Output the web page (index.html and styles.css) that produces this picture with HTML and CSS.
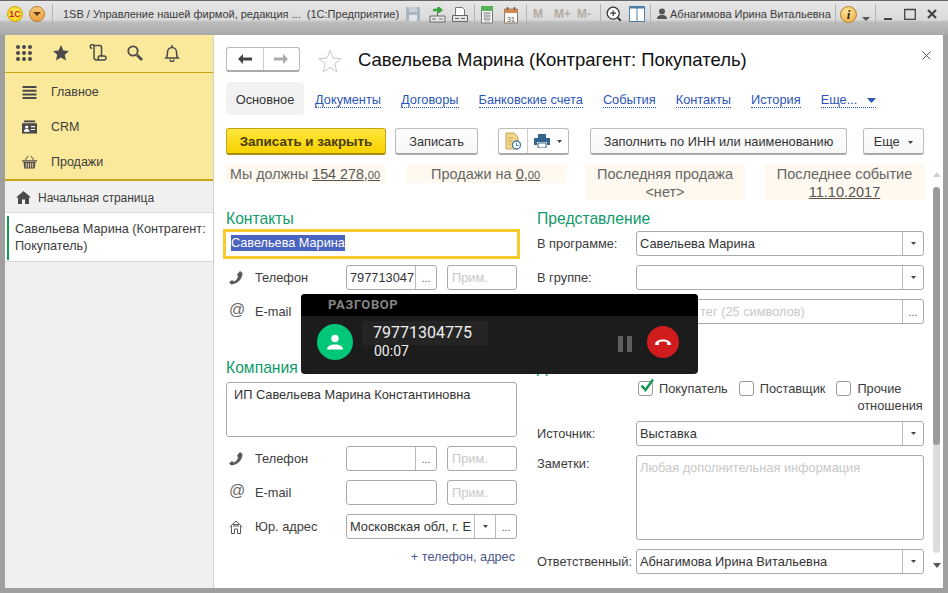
FILE: index.html
```html
<!DOCTYPE html>
<html lang="ru">
<head>
<meta charset="utf-8">
<title>1SB</title>
<link rel="stylesheet" href="styles.css">
</head>
<body>
<div class="window">
  <header class="titlebar">
    <span class="logo">1С</span>
    <span class="menu-btn"><svg width="10" height="6" viewBox="0 0 10 6"><path d="M1 1h8L5 5z" fill="#5a3c10"/></svg></span>
    <span class="tsep sep-a"></span>
    <span class="apptitle">1SB / Управление нашей фирмой, редакция ...&nbsp; (1С:Предприятие)</span>
    <span class="ticons">
      <svg class="ti t0" width="14" height="16" viewBox="0 0 14 16"><path d="M0 1h14v14H0z" fill="#a9b6c2"/><path d="M3 1h8v5H3z" fill="#c8d0d8"/><path d="M3 9h8v6H3z" fill="#dfe4e8"/></svg>
      <svg class="ti t1" width="17" height="18" viewBox="0 0 17 18"><path d="M8 1h2.500l3.500 3-3.500 3H8V5.300H4V2.700h4z" fill="#3aa63a"/><path d="M1 10h15v6H1z" fill="#e8e8e8" stroke="#666"/><path d="M3 13h4M10 13h4M8.500 7v3" stroke="#666"/></svg>
      <svg class="ti t2" width="16" height="18" viewBox="0 0 16 18"><path d="M3.500 1.500h7l2 2v7h-9z" fill="#fff" stroke="#777"/><path d="M.5 9.500h15v6H.5z" fill="#e4e4e4" stroke="#666"/><path d="M3 12.500h4M9 12.500h4" stroke="#666"/></svg>
      <span class="tsep sep-b"></span>
      <svg class="ti t3" width="12" height="18" viewBox="0 0 12 18"><path d="M.5 1h11v16H.5z" fill="#fff" stroke="#777"/><path d="M0 0h12v5H0z" fill="#5bb05b"/><path d="M2 7h8M2 10h8M2 13h8M4 6v10M6 6v10M8 6v10" stroke="#999"/></svg>
      <svg class="ti t4" width="14" height="18" viewBox="0 0 14 18"><path d="M.5 3h13v14H.5z" fill="#fbfaf6" stroke="#8a7a66"/><path d="M.5 3h13v4H.5z" fill="#d08a55"/><path d="M3.500 1v3M10.500 1v3" stroke="#8a5a35" stroke-width="1.500"/><text x="7" y="15.500" text-anchor="middle" class="cal31">31</text></svg>
      <span class="tsep sep-c"></span>
      <span class="mem m0">M</span><span class="mem m1">M+</span><span class="mem m2">M-</span>
      <span class="tsep sep-d"></span>
      <svg class="ti t5" width="16" height="16" viewBox="0 0 20 20"><circle cx="9" cy="9" r="7.500" fill="#fff" stroke="#333" stroke-width="1.500"/><path d="M14.500 14.500l4 4" stroke="#333" stroke-width="2.400"/><path d="M5.500 9h7M9 5.500v7" stroke="#333" stroke-width="1.500"/></svg>
      <svg class="ti t6" width="16" height="16" viewBox="0 0 16 16"><path d="M.5.500h15v15H.5z" fill="#fff" stroke="#4c7fa8"/><path d="M.5.500h15v2H.5z" fill="#4c7fa8"/><path d="M8 1v14" stroke="#4c7fa8"/></svg>
      <span class="tsep sep-e"></span>
      <svg class="ti t7" width="10" height="12" viewBox="0 0 10 12"><circle cx="5" cy="3.500" r="3" fill="#555"/><path d="M0 11c0-3 2-4 5-4s5 1 5 4z" fill="#555"/></svg>
      <span class="username">Абнагимова Ирина Витальевна</span>
      <span class="tsep sep-f"></span>
      <span class="info">i</span>
      <svg class="ti t8" width="8" height="4" viewBox="0 0 8 4"><path d="M0 0h8L4 4z" fill="#555"/></svg>
      <span class="tsep sep-g"></span>
      <svg class="ti t9" width="8" height="12" viewBox="0 0 8 12"><path d="M0 10h8" stroke="#444" stroke-width="2"/></svg>
      <svg class="ti t10" width="12" height="12" viewBox="0 0 12 12"><path d="M.7 1.500h10.600v10H.7z" fill="none" stroke="#444" stroke-width="1.300"/></svg>
      <svg class="ti t11" width="10" height="10" viewBox="0 0 10 10"><path d="M1 1l8 8M9 1l-8 8" stroke="#444" stroke-width="2.200"/></svg>
    </span>
  </header>
  <div class="main">
    <aside class="sidebar">
      <div class="sidetools">
        <svg width="18" height="18" viewBox="0 0 18 18" fill="#4a4a4a"><circle cx="3" cy="3" r="2"/><circle cx="9" cy="3" r="2"/><circle cx="15" cy="3" r="2"/><circle cx="3" cy="9" r="2"/><circle cx="9" cy="9" r="2"/><circle cx="15" cy="9" r="2"/><circle cx="3" cy="15" r="2"/><circle cx="9" cy="15" r="2"/><circle cx="15" cy="15" r="2"/></svg>
        <svg width="18" height="18" viewBox="0 0 18 18" fill="#4a4a4a"><path d="M9 1l2.400 5.400 5.600.6-4.200 3.800 1.200 5.700L9 13.600 4 16.500l1.200-5.700L1 7l5.600-.6z"/></svg>
        <svg width="18" height="18" viewBox="0 0 18 18" fill="none" stroke="#4a4a4a" stroke-width="1.500"><path d="M3 4.500a2 2 0 1 1 2-3h6c1 0 1.500.7 1.500 2v9"/><path d="M5 1.500V13c0 1.500 1 3 2.500 3H15a2 2 0 0 0 0-4h-3a2 2 0 0 0-1.500 4"/></svg>
        <svg width="18" height="18" viewBox="0 0 18 18" fill="none" stroke="#4a4a4a"><circle cx="7" cy="7" r="4.700" stroke-width="1.800"/><path d="M11 11l5 5" stroke-width="2.600"/></svg>
        <svg width="18" height="18" viewBox="0 0 18 18" fill="none" stroke="#4a4a4a" stroke-width="1.500"><path d="M3 14c1.500-1.500 1.500-3 1.500-6a4.500 4.500 0 0 1 9 0c0 3 0 4.500 1.500 6z"/><path d="M9 1v2M7 15.500a2 2 0 0 0 4 0" /></svg>
      </div>
      <nav class="sections">
        <div class="section"><svg class="sico" width="14" height="14" viewBox="0 0 14 14" fill="#4a4a4a"><path d="M0 1h14v2H0zM0 4.700h14v2H0zM0 8.400h14v2H0zM0 12h14v2H0z"/></svg><span>Главное</span></div>
        <div class="section"><svg class="sico" width="16" height="14" viewBox="0 0 16 14"><path d="M2 0h12v2H2z" fill="#4a4a4a"/><path d="M0 3h16v11H0z" fill="#4a4a4a"/><circle cx="5" cy="7" r="1.700" fill="#fff"/><path d="M2 12c0-2 1-3 3-3s3 1 3 3zM9.500 6h4.500v1.300H9.500zM9.500 9h4.500v1.300H9.500z" fill="#fff"/></svg><span>CRM</span></div>
        <div class="section"><svg class="sico" width="16" height="14" viewBox="0 0 16 14" fill="#4a4a4a"><path d="M0 5h16v1.500H0zM1.500 7h13l-1 7h-11z"/><path d="M3.500 5l3-4.500M12.500 5l-3-4.500" stroke="#4a4a4a" fill="none"/><path d="M4.500 8v5M6.800 8v5M9.200 8v5M11.500 8v5" stroke="#fbe99b" fill="none"/></svg><span>Продажи</span></div>
      </nav>
      <div class="home"><svg width="15" height="13" viewBox="0 0 15 13" fill="#4a4a4a"><path d="M7.500 0L15 6.500h-2V13H9V8.500H6V13H2V6.500H0z"/></svg><span>Начальная страница</span></div>
      <div class="opened">Савельева Марина (Контрагент: Покупатель)</div>
    </aside>
    <main class="content">
      <div class="headrow">
        <div class="navpair">
          <span class="navbtn"><svg width="14" height="10" viewBox="0 0 14 10"><path d="M0 5l5-5v3.500h9v3H5V10z" fill="#444"/></svg></span>
          <span class="navbtn"><svg width="14" height="10" viewBox="0 0 14 10"><path d="M14 5L9 0v3.500H0v3h9V10z" fill="#aaa"/></svg></span>
        </div>
        <svg class="star" width="24" height="24" viewBox="0 0 24 24"><path d="M12 1.500l3 7.600 8 .6-6.200 5.100 2 8L12 18.500l-6.800 4.300 2-8L1 9.700l8-.6z" fill="#fff" stroke="#c8c8c8"/></svg>
        <h1 class="title">Савельева Марина (Контрагент: Покупатель)</h1>
        <svg class="close" width="9" height="9" viewBox="0 0 9 9"><path d="M.5.500l8 8M8.500.500l-8 8" stroke="#555"/></svg>
      </div>
      <div class="tabs">
        <span class="tab active">Основное</span>
        <span class="tab">Документы</span>
        <span class="tab">Договоры</span>
        <span class="tab">Банковские счета</span>
        <span class="tab">События</span>
        <span class="tab">Контакты</span>
        <span class="tab">История</span>
        <span class="tab more">Еще... <svg width="9" height="5" viewBox="0 0 9 5"><path d="M0 0h9L4.500 5z" fill="#2a56b8"/></svg></span>
      </div>
      <div class="actions">
        <button class="btn primary">Записать и закрыть</button>
        <button class="btn save">Записать</button>
        <div class="btngroup">
          <span class="gbtn first"><svg width="16" height="18" viewBox="0 0 16 18"><path d="M1 1h8l4 4v12H1z" fill="#f0d68e" stroke="#c9a653"/><path d="M3 6h5M3 9h4M3 12h3" stroke="#c9a653"/><circle cx="11.500" cy="13" r="4" fill="#fff" stroke="#3c78a8" stroke-width="1.300"/><path d="M11.500 11v2.500h2" stroke="#3c78a8" fill="none"/></svg></span>
          <span class="gbtn second"><svg width="16" height="14" viewBox="0 0 16 14"><path d="M4 0h8v4H4z" fill="#33648c"/><path d="M0 4h16v7h-3V8H3v3H0z" fill="#33648c"/><path d="M4 9h8v5H4z" fill="#fff" stroke="#33648c"/></svg><svg width="5" height="3" viewBox="0 0 5 3"><path d="M0 0h5L2.500 3z" fill="#444"/></svg></span>
        </div>
        <button class="btn fill">Заполнить по ИНН или наименованию</button>
        <button class="btn moreb">Еще <svg width="5" height="3" viewBox="0 0 5 3"><path d="M0 0h5L2.500 3z" fill="#444"/></svg></button>
      </div>
      <div class="scrollarea">
        <div class="formarea">
          <div class="infos">
            <div class="infobox short left">Мы должны <span class="money">154 278,<small>00</small></span></div>
            <div class="infobox short">Продажи на <span class="money">0,<small>00</small></span></div>
            <div class="infobox">Последняя продажа<br>&lt;нет&gt;</div>
            <div class="infobox">Последнее событие<br><span class="money">11.10.2017</span></div>
          </div>
          <div class="columns">
            <section class="col leftcol">
              <h2 class="heading">Контакты</h2>
              <div class="focusfield"><span class="selected">Савельева Марина</span></div>
              <div class="row">
                <svg class="ric" width="14" height="14" viewBox="0 0 14 14"><path d="M11 0l2.500 2c0 6-5 11-11 11.500L0 11.500l3-2.500 2 1.500c2-1 3.500-3 4-5L8 3.500z" fill="#5a5a5a"/></svg>
                <span class="rlabel">Телефон</span>
                <span class="field phone"><span class="ftext">797713047</span><span class="dots">...</span></span>
                <span class="field note">Прим.</span>
              </div>
              <div class="row">
                <span class="ric at">@</span>
                <span class="rlabel">E-mail</span>
                <span class="field plain"></span>
                <span class="field note">Прим.</span>
              </div>
              <h2 class="heading second-h">Компания</h2>
              <div class="field area company">ИП Савельева Марина Константиновна</div>
              <div class="row">
                <svg class="ric" width="14" height="14" viewBox="0 0 14 14"><path d="M11 0l2.500 2c0 6-5 11-11 11.500L0 11.500l3-2.500 2 1.500c2-1 3.500-3 4-5L8 3.500z" fill="#5a5a5a"/></svg>
                <span class="rlabel">Телефон</span>
                <span class="field phone"><span class="ftext"></span><span class="dots">...</span></span>
                <span class="field note">Прим.</span>
              </div>
              <div class="row">
                <span class="ric at">@</span>
                <span class="rlabel">E-mail</span>
                <span class="field plain"></span>
                <span class="field note">Прим.</span>
              </div>
              <div class="row">
                <svg class="ric" width="14" height="14" viewBox="0 0 14 14" fill="none" stroke="#5a5a5a"><path d="M.5 7L7 1l6.500 6M2.500 6v7.500h3V9h3v4.500h3V6M4 6h6M4 4.500h6"/></svg>
                <span class="rlabel">Юр. адрес</span>
                <span class="field address"><span class="ftext">Московская обл, г. Е</span><span class="drop"><svg width="5" height="3" viewBox="0 0 5 3"><path d="M0 0h5L2.500 3z" fill="#444"/></svg></span><span class="dots">...</span></span>
              </div>
              <div class="addlink">+ телефон, адрес</div>
            </section>
            <section class="col rightcol">
              <h2 class="heading">Представление</h2>
              <div class="rrow first-r"><label class="flabel">В программе:</label><span class="field combo"><span class="ftext">Савельева Марина</span><span class="drop"><svg width="5" height="3" viewBox="0 0 5 3"><path d="M0 0h5L2.500 3z" fill="#444"/></svg></span></span></div>
              <div class="rrow"><label class="flabel">В группе:</label><span class="field combo"><span class="ftext"></span><span class="drop"><svg width="5" height="3" viewBox="0 0 5 3"><path d="M0 0h5L2.500 3z" fill="#444"/></svg></span></span></div>
              <div class="rrow"><label class="flabel">Теги:</label><span class="field combo"><span class="ftext ghost">Добавить тег (25 символов)</span><span class="dots">...</span></span></div>
              <h2 class="heading second-h">Деятельность</h2>
              <div class="checks">
                <span class="check"><span class="box"><svg width="16" height="15" viewBox="0 0 16 15"><path d="M2.500 7.500l4 4.500L14 1.500" fill="none" stroke="#119a50" stroke-width="2.500"/></svg></span>Покупатель</span>
                <span class="check"><span class="box"></span>Поставщик</span>
                <span class="check wrap"><span class="box"></span><span>Прочие<br>отношения</span></span>
              </div>
              <div class="rrow"><label class="flabel">Источник:</label><span class="field combo"><span class="ftext">Выставка</span><span class="drop"><svg width="5" height="3" viewBox="0 0 5 3"><path d="M0 0h5L2.500 3z" fill="#444"/></svg></span></span></div>
              <div class="rrow notes"><label class="flabel">Заметки:</label><span class="field notearea">Любая дополнительная информация</span></div>
              <div class="rrow"><label class="flabel">Ответственный:</label><span class="field combo"><span class="ftext">Абнагимова Ирина Витальевна</span><span class="drop"><svg width="5" height="3" viewBox="0 0 5 3"><path d="M0 0h5L2.500 3z" fill="#444"/></svg></span></span></div>
            </section>
          </div>
        </div>
        <div class="scrollbar">
          <svg class="sarrow" width="8" height="5" viewBox="0 0 8 5"><path d="M0 5h8L4 0z" fill="#d0d0d0"/></svg>
          <div class="track"><div class="thumb"></div></div>
          <svg class="sarrow" width="8" height="5" viewBox="0 0 8 5"><path d="M0 0h8L4 5z" fill="#555"/></svg>
        </div>
      </div>
    </main>
  </div>
</div>
<div class="call">
  <div class="callhead">РАЗГОВОР</div>
  <div class="callbody">
    <span class="avatar"><svg width="16" height="16" viewBox="0 0 16 16" fill="#fff"><circle cx="8" cy="4.500" r="3.700"/><path d="M0 15.500c0-3.500 3.500-5 8-5s8 1.500 8 5z"/></svg></span>
    <div class="callinfo">
      <div class="callnum">79771304775</div>
      <div class="calltime">00:07</div>
    </div>
    <span class="pause"><i></i><i></i></span>
    <span class="hangup"><svg width="18" height="8" viewBox="0 0 18 8"><path d="M1 6.500C1 3 5 1.500 9 1.500S17 3 17 6.500l-.5.500h-3l-.5-.5V4.500C12 3.800 10.500 3.500 9 3.500s-3 .3-4 1v2l-.5.500h-3z" fill="#fff"/></svg></span>
  </div>
</div>
</body>
</html>
```
FILE: styles.css
```css
* { box-sizing: border-box; }
html, body { margin: 0; padding: 0; }
body {
  position: relative;
  width: 948px;
  height: 593px;
  overflow: hidden;
  font-family: "Liberation Sans", Arial, sans-serif;
  font-size: 12px;
  color: #333;
  background: #a8a8a8;
}
.window {
  width: 948px;
  height: 593px;
  display: flex;
  flex-direction: column;
  background: #9f9f9f;
  border-top: 1px solid #666;
}
.titlebar {
  height: 34px;
  display: flex;
  align-items: flex-start;
  padding: 3px 0 0 7px;
  background: linear-gradient(#e6e6e6 0, #dadada 55%, #bcbcbc 62%, #a9a9a9 100%);
  flex: none;
}
.logo {
  width: 16px; height: 16px; border-radius: 50%; flex: none; margin-top: 2px;
  background: radial-gradient(circle at 50% 40%, #ffef6a, #f6c900);
  color: #d41c1c; font-weight: bold; font-size: 9px; line-height: 14px; text-align: center;
  border: 1px solid #c9a800;
}
.menu-btn {
  width: 16px; height: 16px; border-radius: 50%; margin-left: 6px; margin-top: 2px; flex: none;
  background: linear-gradient(#f8c878, #eca040);
  border: 1px solid #b87d2c;
  display: flex; align-items: center; justify-content: center;
}
.tsep { width: 1px; height: 20px; background: #b4b4b4; flex: none; }
.sep-a { margin-left: 7px; }
.apptitle { margin-left: 10px; width: 343px; flex: none; line-height: 20px; white-space: nowrap; font-size: 11px; color: #3a3a3a; }
.ticons { display: flex; align-items: flex-start; flex: 1; }
.ti { flex: none; }
.ticons > svg { margin-top: 2px; }
.t0 { margin-left: 0; }
.t1 { margin-left: 9px; }
.t2 { margin-left: 6px; }
.sep-b { margin-left: 6px; }
.t3 { margin-left: 6px; }
.t4 { margin-left: 11px; }
.cal31 { font: 7px "Liberation Sans", sans-serif; fill: #555; }
.sep-c { margin-left: 8px; }
.mem { font-weight: bold; color: #b5aba2; font-size: 12px; line-height: 20px; flex: none; }
.m0 { margin-left: 6px; width: 21px; }
.m1 { width: 23px; }
.m2 { width: 23px; }
.sep-d { margin-left: 0; }
.t5 { margin-left: 5px; }
.t6 { margin-left: 7px; }
.sep-e { margin-left: 5px; }
.ticons > .t7 { margin-left: 6px; margin-top: 4px; }
.username { margin-left: 3px; width: 165px; line-height: 20px; white-space: nowrap; color: #3a3a3a; font-size: 11px; flex: none; }
.sep-f { margin-left: 0; }
.info {
  width: 17px; height: 17px; margin: 2px 0 0 4px; border-radius: 50%;
  background: radial-gradient(circle at 40% 30%, #ffe79a, #eba93a);
  border: 1px solid #b87d2c; flex: none;
  font: italic bold 13px/15px "Liberation Serif", serif; color: #3a2a10; text-align: center;
}
.ticons > .t8 { margin-left: 5px; margin-top: 13px; }
.sep-g { margin-left: 5px; }
.ticons > .t9 { margin-left: 8px; margin-top: 5px; }
.ticons > .t10 { margin-left: 12px; margin-top: 4px; }
.ticons > .t11 { margin-left: 11px; margin-top: 5px; }

.main { flex: 1; display: flex; margin: 0 5px 5px; min-height: 0; }
.sidebar { width: 209px; flex: none; display: flex; flex-direction: column; background: #f0f0f0; border-right: 1px solid #cfcfcf; }
.sidetools {
  height: 38px; flex: none; background: #fbe99b; border-bottom: 1px solid #c8a415;
  display: flex; align-items: center; gap: 19px; padding: 0 0 1px 10px;
}
.sections { flex: none; height: 108px; padding-top: 1px; background: #fbe99b; border-bottom: 2px solid #c8a415; }
.section { height: 35px; display: flex; align-items: center; color: #3c3c3c; padding-left: 17px; font-size: 12.500px; }
.section .sico { margin-right: 14px; flex: none; width: 15px; }
.home {
  height: 32px; flex: none; display: flex; align-items: center; gap: 7px; padding: 2px 0 0 11px; color: #3c3c3c;
  border-bottom: 1px solid #d9d9d9;
}
.opened {
  height: 49px; flex: none; border-bottom: 1px solid #d9d9d9;
  background: #fff linear-gradient(#119a50, #119a50) no-repeat 2px 3px / 2px 44px;
  padding: 8px 4px 0 10px; line-height: 17px; color: #3c3c3c; font-size: 12.700px;
}
.content { flex: 1; background: #fff; display: flex; flex-direction: column; min-width: 0; }
.headrow { height: 47px; flex: none; display: flex; align-items: flex-start; padding: 12px 0 0 12px; position: relative; }
.navpair { width: 74px; height: 25px; display: flex; border: 1px solid #b9b9b9; border-bottom: 2px solid #a9a9a9; border-radius: 3px; flex: none; }
.navbtn { flex: 1; display: flex; align-items: center; justify-content: center; }
.navbtn + .navbtn { border-left: 1px solid #ccc; }
.star { margin: 2px 0 0 18px; flex: none; }
.title { margin: 2px 0 0 16px; font-size: 18.500px; font-weight: normal; color: #111; line-height: 22px; white-space: nowrap; }
.close { position: absolute; left: 708px; top: 16px; }
.tabs { height: 33px; flex: none; display: flex; padding-left: 12px; gap: 20px; align-items: center; font-size: 12.800px; }
.tab { color: #2a56b8; border-bottom: 1px dotted #2a56b8; line-height: 15px; margin-top: 2px; white-space: nowrap; }
.tab.active { color: #333; background: #f2f2f2; border: 0; height: 33px; width: 78px; line-height: 35px; padding: 0; text-align: center; border-radius: 4px; margin: 0 -9px 0 0; }
.tab.more svg { margin-left: 6px; vertical-align: 1px; }
.actions { height: 45px; flex: none; display: flex; padding: 13px 0 0 12px; align-items: flex-start; }
.btn {
  height: 27px; padding: 0; background: linear-gradient(#fff, #f6f6f6);
  border: 1px solid #bdbdbd; border-bottom: 2px solid #a9a9a9; border-radius: 3px;
  font: 12.800px "Liberation Sans", Arial, sans-serif; color: #333; flex: none;
}
.primary { width: 160px; font-weight: bold; font-size: 13.400px; background: linear-gradient(#ffe63c, #f6d200); border-color: #c4a515; border-bottom-color: #a88c10; color: #4a3c00; }
.save { width: 83px; margin-left: 9px; }
.btngroup { width: 71px; height: 27px; margin-left: 20px; display: flex; flex: none; background: #fff; border: 1px solid #bdbdbd; border-bottom: 2px solid #a9a9a9; border-radius: 3px; }
.gbtn { display: flex; align-items: center; justify-content: center; }
.first { width: 29px; border-right: 1px solid #ccc; }
.second { flex: 1; gap: 7px; }
.fill { width: 257px; margin-left: 21px; }
.moreb { width: 61px; margin-left: 16px; }
.moreb svg { margin-left: 5px; vertical-align: 2px; }

.scrollarea { flex: 1; display: flex; min-height: 0; }
.formarea { width: 718px; flex: none; padding: 4px 0 0 12px; }
.infos { display: grid; grid-template-columns: repeat(4, 160px); column-gap: 19.500px; height: 36px; align-items: start; }
.infobox { background: #fff9ef; text-align: center; font-size: 14.500px; line-height: 18px; padding-top: 1px; color: #666; height: 36px; }
.infobox.short { height: 19px; }
.infobox.left { text-align: left; padding-left: 4px; font-size: 14.300px; }
.money { text-decoration: underline; color: #555; }
.money small { font-size: 11px; }
.columns { display: flex; gap: 20px; margin-top: 10px; }
.col { flex: none; }
.leftcol { width: 291px; }
.rightcol { width: 387px; }
.heading { margin: 0; height: 20px; font-size: 15.700px; line-height: 18px; font-weight: normal; color: #119a6a; }
.second-h { margin-top: 35px; }
.focusfield {
  width: 297px; height: 30px; margin: -1px 0 6px -3px; border: 3px solid #f9cb2c;
  padding: 3px 0 0 5px; font-size: 12.700px; line-height: 16px;
}
.selected { background: #4a62c0; color: #fff; display: inline-block; }
.row { display: flex; align-items: center; height: 25px; margin-bottom: 9px; font-size: 12.800px; }
.ric { width: 14px; flex: none; margin: 0 12px 0 3px; }
.ric.at { font-size: 16px; color: #666; margin-top: -4px; line-height: 16px; }
.rlabel { width: 91px; flex: none; color: #3c3c3c; }
.field { display: flex; height: 25px; border: 1px solid #aaa; border-radius: 3px; align-items: center; background: #fff; flex: none; color: #333; font-size: 12.800px; }
.phone { width: 91px; }
.plain { width: 91px; }
.note { width: 70px; margin-left: 10px; padding-left: 4px; color: #c8c8c8; }
.ftext { flex: 1; padding-left: 3px; white-space: nowrap; overflow: hidden; min-width: 0; }
.dots { width: 21px; height: 100%; border-left: 1px solid #bbb; text-align: center; font-size: 11px; line-height: 25px; flex: none; color: #555; }
.drop { width: 21px; height: 100%; border-left: 1px solid #bbb; display: flex; align-items: center; justify-content: center; flex: none; }
.address { width: 171px; }
.company { width: 291px; height: 55px; margin: 3px 0 9px; align-items: flex-start; padding: 4px 7px; line-height: 16px; }
.addlink { margin-top: 9px; text-align: right; padding-right: 2px; color: #4a5a8c; line-height: 18px; font-size: 12.700px; }
.rrow { display: flex; align-items: center; height: 25px; margin-bottom: 9px; font-size: 12.800px; }
.first-r { margin-top: 1px; }
.flabel { width: 99px; flex: none; color: #3c3c3c; white-space: nowrap; }
.combo { width: 288px; }
.ghost { color: #c8c8c8; }
.checks { height: 33px; margin: 1px 0 8px; padding-left: 101px; display: flex; align-items: flex-start; color: #3c3c3c; font-size: 12.800px; }
.check { display: flex; gap: 6px; line-height: 17px; white-space: nowrap; margin-right: 11px; }
.check.wrap { margin-right: 0; }
.box { width: 15px; height: 15px; border: 1px solid #999; border-radius: 3px; margin-top: 1px; flex: none; position: relative; }
.box svg { position: absolute; left: 0; top: -4px; }
.notes { height: 85px; align-items: flex-start; }
.notes .flabel { padding-top: 1px; }
.notearea { width: 288px; height: 85px; align-items: flex-start; padding: 4px 3px; color: #c8c8c8; }
.scrollbar { width: 8px; margin-left: 1px; flex: none; display: flex; flex-direction: column; align-items: flex-start; padding-top: 12px; }
.sarrow { flex: none; }
.track { width: 7px; flex: 1; margin: 10px 0; border-radius: 4px; background: #dcdcdc; }
.thumb { height: 258px; width: 7px; border-radius: 4px; background: #9b9b9b; }
.sarrow:last-child { margin-bottom: 20px; }

.call {
  position: absolute; left: 301px; top: 294px; width: 397px; height: 80px;
  background: #1c1c1c; border-radius: 4px; overflow: hidden; color: #eee;
}
.callhead { height: 22px; background: #000; padding-left: 27px; font: bold 13px/22px Roboto, sans-serif; letter-spacing: .6px; color: #848484; }
.callbody { height: 58px; display: flex; align-items: flex-start; padding: 8px 0 0 16px; }
.avatar { width: 36px; height: 36px; border-radius: 50%; background: #00c878; flex: none; display: flex; align-items: center; justify-content: center; margin-top: 0; }
.callinfo { width: 126px; margin-left: 9px; margin-top: -3px; font-family: Roboto, sans-serif; }
.callnum { height: 24px; background: #242424; padding-left: 11px; font-size: 16px; line-height: 24px; color: #f0f0f0; }
.calltime { padding-left: 12px; font-size: 14px; line-height: 13px; margin-top: 0; color: #eee; }
.pause { display: flex; gap: 4px; margin: 12px 0 0 130px; flex: none; }
.pause i { display: block; width: 5px; height: 16px; background: #5e5e5e; }
.hangup { width: 32px; height: 32px; border-radius: 50%; background: #d01c1c; flex: none; margin: 2px 0 0 15px; display: flex; align-items: center; justify-content: center; }
```
